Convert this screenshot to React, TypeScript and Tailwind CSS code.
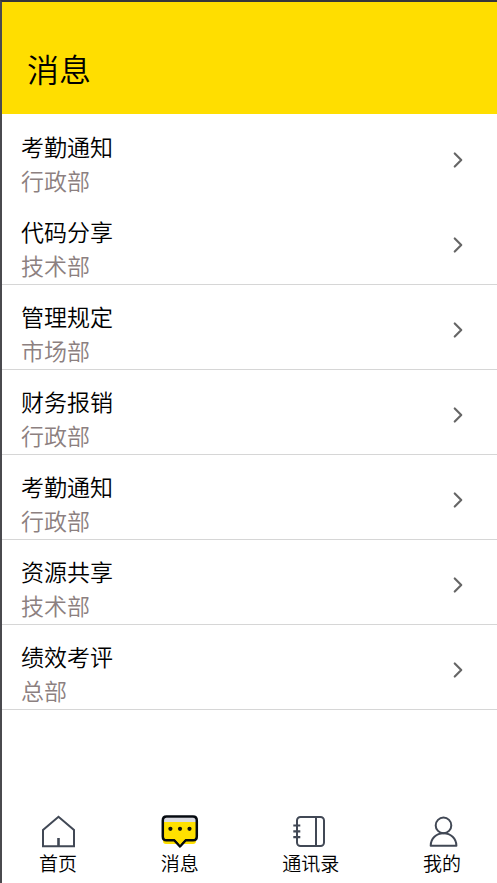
import React, { useState } from "react";
import { ChevronRight } from "lucide-react";

interface Message {
  title: string;
  department: string;
  divider: boolean;
}

const messages: Message[] = [
  { title: "考勤通知", department: "行政部", divider: false },
  { title: "代码分享", department: "技术部", divider: true },
  { title: "管理规定", department: "市场部", divider: true },
  { title: "财务报销", department: "行政部", divider: true },
  { title: "考勤通知", department: "行政部", divider: true },
  { title: "资源共享", department: "技术部", divider: true },
  { title: "绩效考评", department: "总部", divider: true },
];

const iconClass = "w-[38px] h-[34px]";

function HomeIcon() {
  return (
    <svg viewBox="0 0 38 34" className={iconClass} fill="none" stroke="#414855" strokeWidth="2" aria-hidden="true">
      <path d="M4 31.3V15L19.5 1.8L35 15V31.3Z" strokeLinejoin="miter" />
      <path d="M19.5 31V23" strokeWidth="2.6" />
    </svg>
  );
}

function MessageIcon() {
  return (
    <svg viewBox="0 0 38 34" className={iconClass} fill="none" aria-hidden="true">
      <path d="M2 7H35V26Q35 29 32 29H5Q2 29 2 26Z" fill="#ffe000" />
      <path d="M3 3H35V7H3Z" fill="#d9dae0" />
      <path
        d="M5.5 1.5H32Q35.8 1.5 35.8 5.5V21.5Q35.8 25.3 32 25.3H24.5L19 31.5L13.5 25.3H5.5Q1.8 25.3 1.8 21.5V5.5Q1.8 1.5 5.5 1.5Z"
        stroke="#050a10"
        strokeWidth="2.5"
        strokeLinejoin="round"
      />
      <path d="M14 24H24L19 29.6Z" fill="#ffe000" />
      <circle cx="9.4" cy="13.8" r="2.1" fill="#101010" />
      <circle cx="19" cy="13.8" r="2.1" fill="#101010" />
      <circle cx="28.5" cy="13.8" r="2.1" fill="#101010" />
    </svg>
  );
}

function ContactsIcon() {
  return (
    <svg viewBox="0 0 38 34" className={iconClass} fill="none" stroke="#414855" strokeWidth="2" aria-hidden="true">
      <rect x="5" y="2" width="27" height="29" rx="3.5" />
      <path d="M24 2V31" />
      <path d="M1.3 10.5H8.3M1.3 16.3H8.3M1.3 22.2H8.3" strokeWidth="2.2" />
    </svg>
  );
}

function ProfileIcon() {
  return (
    <svg viewBox="0 0 38 34" className={iconClass} fill="none" stroke="#414855" strokeWidth="2" aria-hidden="true">
      <circle cx="20.5" cy="10.4" r="7.8" />
      <path d="M7.7 30.7C7.7 23.5 13.3 18.2 20.5 18.2S33.4 23.5 33.4 30.7Z" strokeLinejoin="round" />
    </svg>
  );
}

const tabs = [
  { id: "home", label: "首页", icon: HomeIcon },
  { id: "messages", label: "消息", icon: MessageIcon },
  { id: "contacts", label: "通讯录", icon: ContactsIcon },
  { id: "me", label: "我的", icon: ProfileIcon },
];

export default function App() {
  const [activeTab, setActiveTab] = useState("messages");

  return (
    <div
      lang="zh-CN"
      className="min-h-screen flex flex-col bg-white border-t-2 border-l-2 border-t-[#35363a] border-l-[#4a4a4e] font-['Noto_Sans_CJK_SC',sans-serif] font-[350] text-black"
    >
      <header className="bg-[#ffde00] px-[25px] pt-[42px] pb-[22px]">
        <h1 className="text-[32px] leading-[48px]">消息</h1>
      </header>

      {/* Message list */}
      <ul className="pt-px">
        {messages.map((message, idx) => (
          <li key={idx} className={message.divider ? "border-b border-[#d6d6d6]" : "border-b border-transparent"}>
            <button type="button" className="w-full flex items-center justify-between pl-[19px] pr-[26px] pt-[14px] pb-0.5 text-left">
              <span className="flex flex-col text-[23px] leading-[34px]">
                <span>{message.title}</span>
                <span className="text-[#8c8080]">{message.department}</span>
              </span>
              <ChevronRight className="w-[26px] h-[26px] mb-1.5 text-[#666]" aria-hidden="true" />
            </button>
          </li>
        ))}
      </ul>

      {/* Bottom tabs */}
      <nav className="mt-auto flex justify-between pl-[37px] pr-9 pt-6 pb-1.5">
        {tabs.map(({ id, label, icon: Icon }) => (
          <button
            key={id}
            type="button"
            onClick={() => setActiveTab(id)}
            aria-current={activeTab === id ? "page" : undefined}
            className="flex flex-col items-center text-[19px] leading-7"
          >
            <Icon />
            <span>{label}</span>
          </button>
        ))}
      </nav>
    </div>
  );
}
